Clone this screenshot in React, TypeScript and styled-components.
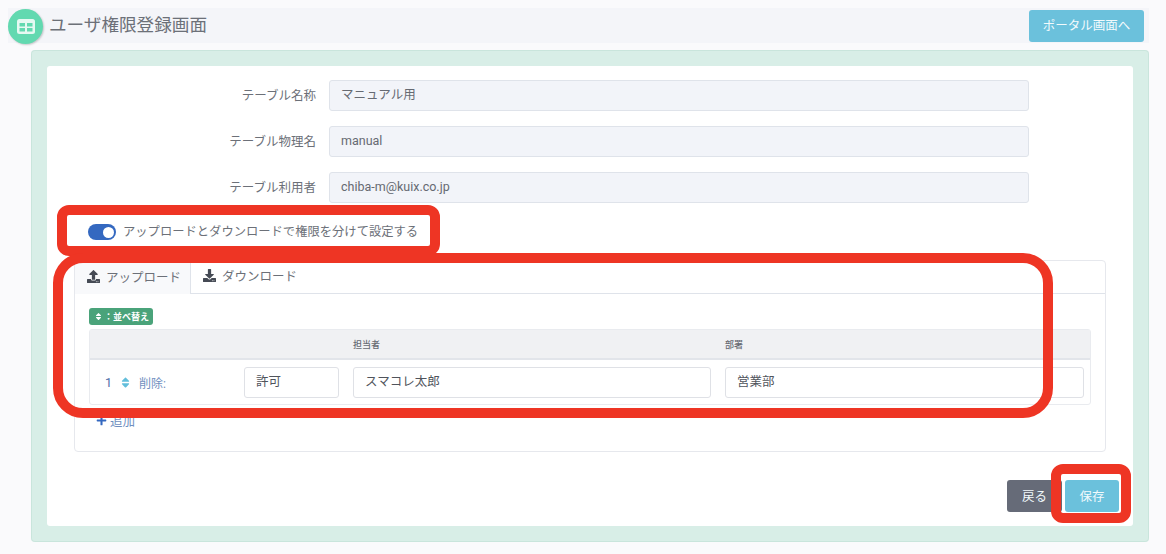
import React from "react";
import styled, { createGlobalStyle } from "styled-components";
import { FaUpload, FaDownload, FaSort, FaPlus } from "react-icons/fa";

const GlobalStyle = createGlobalStyle`
  html, body {
    margin: 0;
    padding: 0;
    background: #fafafc;
    font-family: Roboto, "Noto Sans CJK JP", sans-serif;
    color: #5f6470;
  }
`;

const Page = styled.div`
  position: relative;
  width: 1166px;
  height: 554px;
  overflow: hidden;
  padding: 8px 17px 0 8px;
  box-sizing: border-box;
`;

const Header = styled.div`
  display: flex;
  align-items: center;
  height: 35px;
  background: #f4f5f9;
  padding-right: 5px;
`;

const TitleIcon = styled.div`
  width: 35px;
  height: 35px;
  margin-top: 1px;
  border-radius: 50%;
  background: #62d9b0;
  box-shadow: 1px 1px 2px rgba(0, 0, 0, 0.2);
  display: flex;
  align-items: center;
  justify-content: center;
`;

const Title = styled.h1`
  flex: 1;
  margin: 0 0 0 6px;
  font-size: 17.6px;
  font-weight: 400;
  line-height: 35px;
  color: #6c7078;
`;

const Button = styled.button<{ $tone: string; $width: number }>`
  border: 0;
  border-radius: 3px;
  background: ${(p) => p.$tone};
  color: #f2fafc;
  font-family: inherit;
  font-size: 12.5px;
  padding: 0 0 2px;
  height: 32px;
  width: ${(p) => p.$width}px;
`;

const Panel = styled.div`
  margin: 7px 0 0 23px;
  width: 1118px;
  height: 492px;
  box-sizing: border-box;
  padding: 16px;
  background: #d8eee7;
  border-radius: 4px;
  box-shadow: inset 0 0 0 1px rgba(120, 180, 160, 0.15);
`;

const Card = styled.div`
  height: 460px;
  box-sizing: border-box;
  background: #fff;
  border-radius: 3px;
  padding-top: 14px;
`;

const Field = styled.div`
  display: grid;
  grid-template-columns: 269px 700px;
  column-gap: 13px;
  align-items: center;
  height: 31px;
  margin-bottom: 15px;
`;

const Label = styled.label`
  text-align: right;
  font-size: 12.5px;
  padding-bottom: 2px;
  color: #6c7078;
`;

const ReadonlyInput = styled.div`
  height: 31px;
  box-sizing: border-box;
  border: 1px solid #dfe3ea;
  border-radius: 3px;
  background: #f2f4f9;
  padding: 0 11px;
  line-height: 27px;
  font-size: 12.5px;
  color: #666a72;
`;

const SwitchRow = styled.div`
  display: flex;
  align-items: center;
  gap: 7px;
  height: 20px;
  margin: 19px 0 0 41px;
`;

const SwitchTrack = styled.span`
  width: 28px;
  height: 16px;
  border-radius: 8px;
  background: #3468c0;
  display: flex;
  align-items: center;
  justify-content: flex-end;
  padding-right: 2px;
  box-sizing: border-box;
`;

const SwitchKnob = styled.span`
  width: 11px;
  height: 11px;
  border-radius: 50%;
  background: #fff;
`;

const SwitchLabel = styled.span`
  font-size: 12.3px;
  padding-bottom: 2px;
  color: #6c7078;
`;

const TabCard = styled.div`
  margin: 18px 0 0 27px;
  width: 1032px;
  height: 192px;
  box-sizing: border-box;
  border: 1px solid #e6e8ed;
  border-radius: 4px;
`;

const TabBar = styled.div`
  display: flex;
  height: 33px;
  box-sizing: border-box;
  border-bottom: 1px solid #dfe3ea;
`;

const Tab = styled.div<{ $active?: boolean }>`
  display: flex;
  align-items: center;
  gap: 6px;
  padding: 0 9px 3px 12px;
  height: ${(p) => (p.$active ? "33px" : "32px")};
  box-sizing: border-box;
  font-size: 12.5px;
  color: #6c7078;
  background: ${(p) => (p.$active ? "#f8f9fb" : "#fff")};
  border-right: ${(p) => (p.$active ? "1px solid #dfe3ea" : "0")};

  svg {
    color: #454a54;
    font-size: 13px;
  }
`;

const TabBody = styled.div`
  padding: 14px 14px 0 14px;
`;

const SortBadge = styled.div`
  display: flex;
  align-items: center;
  gap: 1px;
  height: 17px;
  width: 64px;
  box-sizing: border-box;
  padding-left: 5px;
  border-radius: 3px;
  background: #4aa37a;
  color: #fff;
  font-size: 9px;
  font-weight: 700;

  svg {
    font-size: 9px;
  }
`;

const Table = styled.div`
  margin-top: 4px;
  width: 1002px;
  height: 76px;
  box-sizing: border-box;
  border: 1px solid #e9ebef;
  border-radius: 3px;
`;

const TableHead = styled.div`
  display: grid;
  grid-template-columns: 263px 372px 1fr;
  height: 30px;
  box-sizing: border-box;
  align-items: center;
  background: #f0f1f3;
  border-bottom: 2px solid #e2e5ea;
  font-size: 9px;
  font-weight: 500;
  color: #666a72;
`;

const HeadCell = styled.div<{ $col: number }>`
  grid-column: ${(p) => p.$col};
`;

const TableRow = styled.div`
  display: grid;
  grid-template-columns: 140px 95px 358px 359px;
  column-gap: 14px;
  height: 44px;
  align-items: center;
`;

const RowHandle = styled.div`
  display: flex;
  align-items: center;
  padding-left: 15px;
  color: #4f6fa8;
  font-size: 12.5px;
`;

const RowNumber = styled.span`
  width: 14px;
`;

const SortIcon = styled(FaSort)`
  color: #62bedb;
  font-size: 13px;
  margin-right: 7px;
`;

const DeleteLabel = styled.span`
  color: #6f8fc0;
  font-size: 12px;
`;

const CellInput = styled.div`
  height: 31px;
  box-sizing: border-box;
  border: 1px solid #dfe1e6;
  border-radius: 3px;
  background: #fff;
  padding: 0 11px;
  line-height: 27px;
  font-size: 12.5px;
  color: #50545c;
`;

const AddLink = styled.div`
  display: flex;
  align-items: center;
  gap: 3px;
  margin: 6px 0 0 7px;
  font-size: 12.5px;
  color: #6f8fc0;

  svg {
    color: #3468c0;
    font-size: 11px;
  }
`;

const Footer = styled.div`
  display: flex;
  justify-content: flex-end;
  gap: 3px;
  margin: 28px 14px 0 0;
`;

/* 赤枠: スクリーンショットに後から描かれた注釈 */
const Callout = styled.div<{ $x: number; $y: number; $w: number; $h: number; $r: number }>`
  position: absolute;
  left: ${(p) => p.$x}px;
  top: ${(p) => p.$y}px;
  width: ${(p) => p.$w}px;
  height: ${(p) => p.$h}px;
  box-sizing: border-box;
  border: 10px solid #ee3524;
  border-radius: ${(p) => p.$r}px;
`;

const TableGlyph = () => (
  <svg width="18" height="15" viewBox="0 0 18 15">
    <rect x="0" y="0" width="18" height="15" rx="2.5" fill="#e6f9f2" />
    <rect x="2.5" y="4" width="5.5" height="3.5" fill="#62d9b0" />
    <rect x="10" y="4" width="5.5" height="3.5" fill="#62d9b0" />
    <rect x="2.5" y="9" width="5.5" height="3.5" fill="#62d9b0" />
    <rect x="10" y="9" width="5.5" height="3.5" fill="#62d9b0" />
  </svg>
);

const fields = [
  { label: "テーブル名称", value: "マニュアル用" },
  { label: "テーブル物理名", value: "manual" },
  { label: "テーブル利用者", value: "chiba-m@kuix.co.jp" },
];

export default function App() {
  return (
    <Page>
      <GlobalStyle />
      <Header>
        <TitleIcon>
          <TableGlyph />
        </TitleIcon>
        <Title>ユーザ権限登録画面</Title>
        <Button $tone="#6bc1dc" $width={115}>
          ポータル画面へ
        </Button>
      </Header>
      <Panel>
        <Card>
          {fields.map((f) => (
            <Field key={f.label}>
              <Label>{f.label}</Label>
              <ReadonlyInput>{f.value}</ReadonlyInput>
            </Field>
          ))}
          <SwitchRow>
            <SwitchTrack>
              <SwitchKnob />
            </SwitchTrack>
            <SwitchLabel>アップロードとダウンロードで権限を分けて設定する</SwitchLabel>
          </SwitchRow>
          <TabCard>
            <TabBar>
              <Tab $active>
                <FaUpload />
                アップロード
              </Tab>
              <Tab>
                <FaDownload />
                ダウンロード
              </Tab>
            </TabBar>
            <TabBody>
              <SortBadge>
                <FaSort />：並べ替え
              </SortBadge>
              <Table>
                <TableHead>
                  <HeadCell $col={2}>担当者</HeadCell>
                  <HeadCell $col={3}>部署</HeadCell>
                </TableHead>
                <TableRow>
                  <RowHandle>
                    <RowNumber>1</RowNumber>
                    <SortIcon />
                    <DeleteLabel>削除:</DeleteLabel>
                  </RowHandle>
                  <CellInput>許可</CellInput>
                  <CellInput>スマコレ太郎</CellInput>
                  <CellInput>営業部</CellInput>
                </TableRow>
              </Table>
              <AddLink>
                <FaPlus />
                追加
              </AddLink>
            </TabBody>
          </TabCard>
          <Footer>
            <Button $tone="#666b78" $width={55}>
              戻る
            </Button>
            <Button $tone="#6bc1dc" $width={54}>
              保存
            </Button>
          </Footer>
        </Card>
      </Panel>
      <Callout $x={57} $y={205} $w={383} $h={51} $r={12} />
      <Callout $x={53} $y={253} $w={1000} $h={165} $r={30} />
      <Callout $x={1051} $y={464} $w={80} $h={59} $r={12} />
    </Page>
  );
}
